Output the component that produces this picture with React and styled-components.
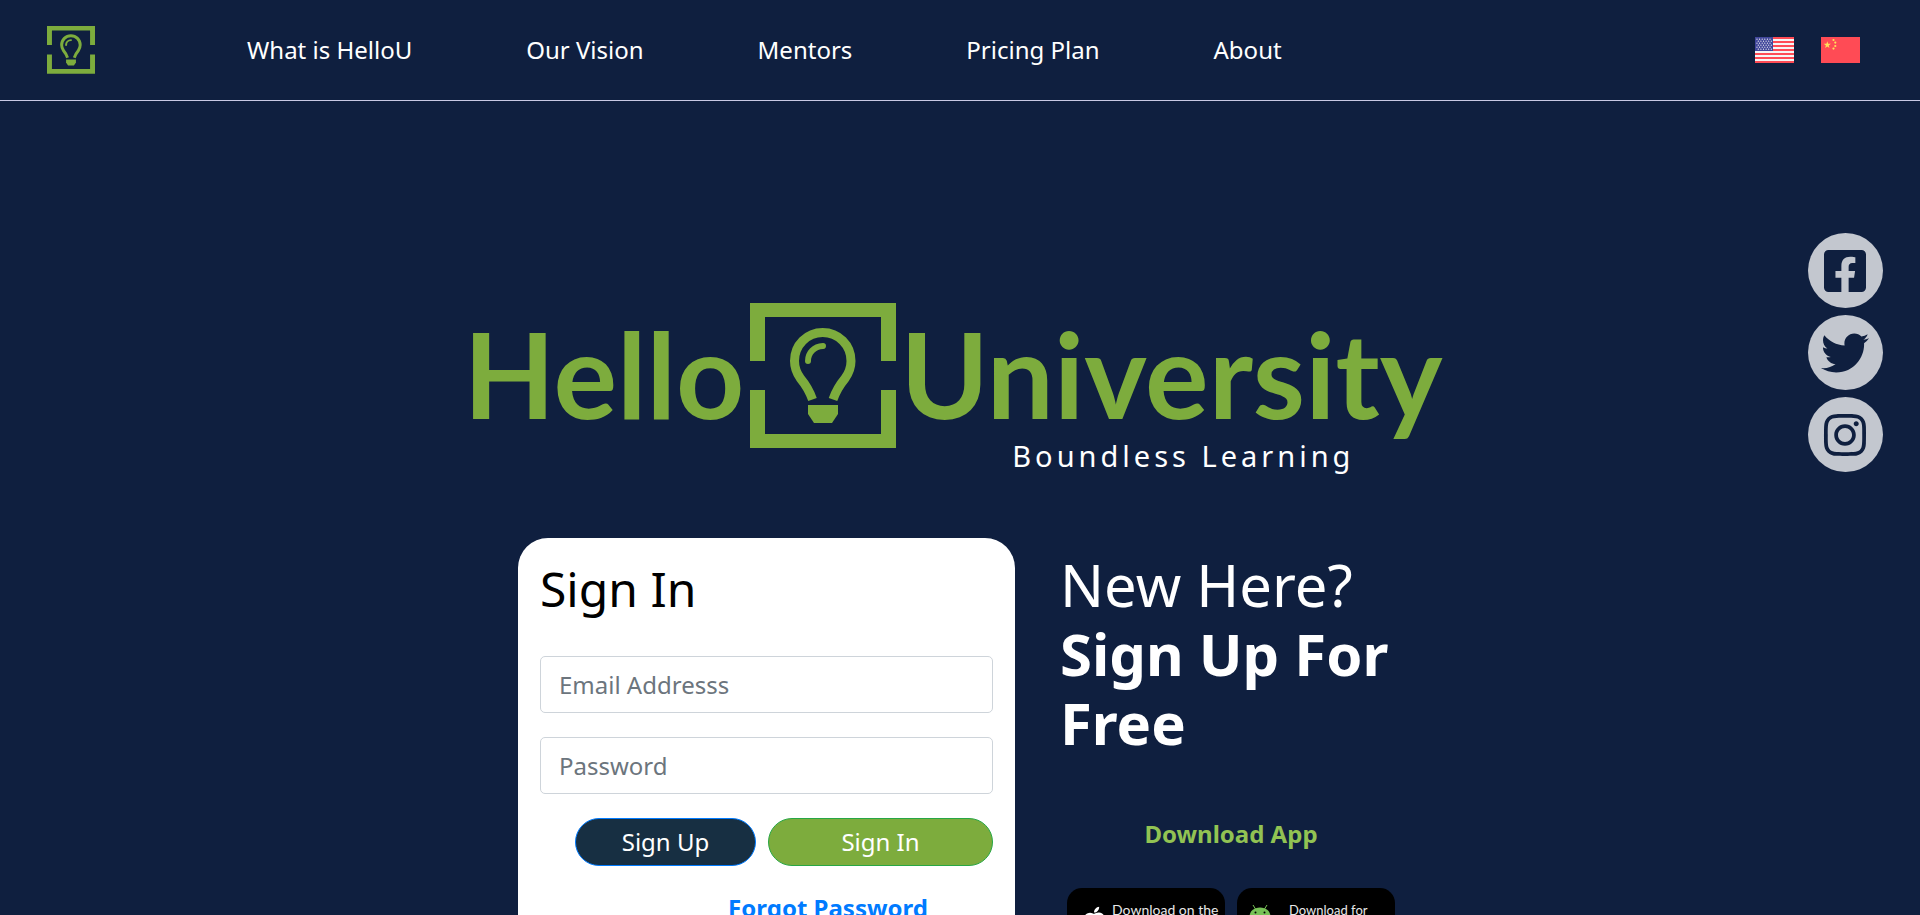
import React from "react";
import styled, { createGlobalStyle } from "styled-components";
import { FaFacebookSquare, FaTwitter, FaInstagram, FaApple } from "react-icons/fa";

const GlobalStyle = createGlobalStyle`
  *, *::before, *::after { box-sizing: border-box; }
  body {
    margin: 0;
    background: #0f1f3f;
    color: #fff;
    font: 24px/36px "Noto Sans", "Liberation Sans", sans-serif;
  }
  a { text-decoration: none; }
`;

const Header = styled.header`
  display: flex;
  align-items: center;
  height: 101px;
  padding: 0 60px 0 47px;
  border-bottom: 1px solid #c9c9e4;
`;

const HomeLink = styled.a`
  display: flex;
  width: 48px;
  margin-right: 152px;
`;

const Nav = styled.nav`
  display: flex;
  gap: 114px;
`;

const NavLink = styled.a`
  color: #fff;
  white-space: nowrap;
`;

const Languages = styled.div`
  display: flex;
  gap: 27px;
  margin-left: auto;
`;

const FlagButton = styled.button`
  display: flex;
  padding: 0;
  border: 0;
  background: none;
  cursor: pointer;
`;

const Social = styled.aside`
  position: fixed;
  top: 233px;
  right: 37px;
  display: flex;
  flex-direction: column;
  gap: 7px;
`;

const SocialLink = styled.a`
  display: flex;
  align-items: center;
  justify-content: center;
  width: 75px;
  height: 75px;
  padding-right: 2px;
  border-radius: 50%;
  background: #c3c7cf;
  color: #0f1f3f;
  font-size: 48px;
`;

const Main = styled.main`
  display: flex;
  flex-direction: column;
  align-items: center;
  padding: 202px 24px 0;
`;

const Brand = styled.div`
  display: flex;
  flex-direction: column;
  padding-right: 14px;
`;

const Wordmark = styled.div`
  display: flex;
  color: #7dac3d;
  font: 700 119px/140px Lato, "Noto Sans", sans-serif;
`;

const Emblem = styled.span`
  display: flex;
  width: 146px;
  height: 145px;
  margin: 0 4px 0 6px;
`;

const Tagline = styled.p`
  align-self: flex-end;
  margin: -10px 88px 0 0;
  font-size: 29px;
  line-height: 36px;
  letter-spacing: 4px;
`;

const Columns = styled.div`
  display: flex;
  align-items: flex-start;
  gap: 45px;
  width: 100%;
  max-width: 884px;
  margin-top: 64px;
`;

const Card = styled.form`
  display: flex;
  flex-direction: column;
  gap: 24px;
  flex: 0 0 497px;
  padding: 22px;
  border-radius: 30px;
  background: #fff;
`;

const CardTitle = styled.h1`
  margin: 0 0 14px;
  color: #000;
  font-size: 48px;
  font-weight: 400;
  line-height: 58px;
`;

const Field = styled.input`
  width: 100%;
  height: 57px;
  padding: 0 18px;
  border: 1px solid #ced4da;
  border-radius: 5px;
  background: #fff;
  color: #495057;
  font: inherit;
  &::placeholder { color: #6c757d; opacity: 1; }
`;

const Actions = styled.div`
  display: flex;
  justify-content: flex-end;
  gap: 12px;
`;

const PillButton = styled.button`
  width: ${(p) => (p.$primary ? 225 : 181)}px;
  height: 48px;
  padding: 0;
  border: 1px solid ${(p) => (p.$primary ? "#28a745" : "#007bff")};
  border-radius: 24px;
  background: ${(p) => (p.$primary ? "#7dac3d" : "#172f42")};
  color: #fff;
  font: inherit;
  cursor: pointer;
`;

const ForgotLink = styled.a`
  align-self: flex-end;
  width: 330px;
  color: #007bff;
  font-weight: 700;
  text-align: center;
`;

const Invite = styled.section`
  flex: 1;
  padding-top: 12px;
`;

const InviteTitle = styled.h2`
  margin: 0;
  font-size: 58px;
  font-weight: 400;
  line-height: 69px;
  strong { display: block; font-weight: 700; }
`;

const DownloadTitle = styled.h3`
  margin: 59px 0 36px;
  color: #92c353;
  font-size: 24px;
  line-height: 36px;
  text-align: center;
`;

const Stores = styled.div`
  display: flex;
  justify-content: center;
  gap: 12px;
`;

const StoreLink = styled.a`
  display: flex;
  align-items: center;
  gap: ${(p) => p.$gap}px;
  width: 158px;
  height: 62px;
  padding-left: ${(p) => p.$inset}px;
  border-radius: 15px;
  background: #000;
  color: #e8e8e8;
  font: ${(p) => p.$size}px/18px Lato, "Noto Sans", sans-serif;
  white-space: nowrap;
  svg { flex: none; }
`;

const StoreName = styled.b`
  display: block;
  font-weight: 700;
`;

function BulbMark() {
  return (
    <svg viewBox="0 0 146 145" width="100%" height="100%" fill="none" aria-hidden="true">
      <path fill="#7dac3d" d="M0 0H146V58H131V14H15V58H0ZM0 87H15V131H131V87H146V145H0Z" />
      <path
        stroke="#7dac3d"
        strokeWidth="9"
        d="M62.500 96.500C59.500 88 55.500 81.500 50.500 75.500C46.500 70 44.500 64.500 44.500 58C44.500 42 57 29.500 72.700 29.500S101 42 101 58C101 64.500 99 70 95 75.500C90 81.500 86 88 83 96.500"
      />
      <path stroke="#7dac3d" strokeWidth="6" strokeLinecap="round" d="M58 58C58 50 64 43.500 73 43" />
      <path fill="#7dac3d" d="M58 102H88V111L82 120H64L58 111Z" />
    </svg>
  );
}

function FlagUS() {
  const stars = [];
  for (let r = 0; r < 6; r++)
    for (let c = 0; c < 6; c++)
      stars.push(<circle key={`${r}-${c}`} cx={2 + c * 2.6 + (r % 2) * 1.3} cy={2.2 + r * 2} r="0.6" />);
  return (
    <svg width="39" height="26" viewBox="0 0 39 26" aria-hidden="true">
      <rect width="39" height="26" fill="#ff4b55" />
      {[2, 6, 10, 14, 18, 22].map((y) => (
        <rect key={y} y={y} width="39" height="2" fill="#f5f5f5" />
      ))}
      <rect width="18" height="14" fill="#41479b" />
      <g fill="#f5f5f5">{stars}</g>
    </svg>
  );
}

function FlagCN() {
  return (
    <svg width="39" height="26" viewBox="0 0 39 26" aria-hidden="true">
      <rect width="39" height="26" fill="#ff4b55" />
      <g fill="#ffe15a">
        <path d="M6.300 4.200L7.200 6.800H9.900L7.700 8.400L8.500 11L6.300 9.400L4.100 11L4.900 8.400L2.700 6.800H5.400Z" />
        <circle cx="12.500" cy="3" r="1.100" />
        <circle cx="14.300" cy="5.600" r="1.100" />
        <circle cx="14.300" cy="9" r="1.100" />
        <circle cx="12.500" cy="11.600" r="1.100" />
      </g>
    </svg>
  );
}

function AndroidBot() {
  return (
    <svg width="30" height="28" viewBox="0 0 30 28" fill="#78c257" aria-hidden="true">
      <path d="M4.500 12C4.500 6 9 2.500 15 2.500S25.500 6 25.500 12Z" />
      <path d="M8 0L10.500 4M22 0L19.500 4" stroke="#78c257" />
      <circle cx="10.500" cy="7.500" r="1" fill="#000" />
      <circle cx="19.500" cy="7.500" r="1" fill="#000" />
      <path d="M4.500 13H25.500V21Q25.500 23 23.500 23H6.500Q4.500 23 4.500 21Z" />
      <rect x="0" y="13" width="3.500" height="8" rx="1.700" />
      <rect x="26.500" y="13" width="3.500" height="8" rx="1.700" />
      <rect x="9" y="20" width="4" height="8" rx="2" />
      <rect x="17" y="20" width="4" height="8" rx="2" />
    </svg>
  );
}

const NAV = ["What is HelloU", "Our Vision", "Mentors", "Pricing Plan", "About"];

export default function App() {
  return (
    <>
      <GlobalStyle />
      <Header>
        <HomeLink href="#" aria-label="Home"><BulbMark /></HomeLink>
        <Nav>
          {NAV.map((label) => (
            <NavLink key={label} href="#">{label}</NavLink>
          ))}
        </Nav>
        <Languages>
          <FlagButton type="button" aria-label="English"><FlagUS /></FlagButton>
          <FlagButton type="button" aria-label="中文"><FlagCN /></FlagButton>
        </Languages>
      </Header>
      <Social>
        <SocialLink href="#" aria-label="Facebook"><FaFacebookSquare /></SocialLink>
        <SocialLink href="#" aria-label="Twitter"><FaTwitter /></SocialLink>
        <SocialLink href="#" aria-label="Instagram"><FaInstagram /></SocialLink>
      </Social>
      <Main>
        <Brand>
          <Wordmark>
            <span>Hello</span>
            <Emblem><BulbMark /></Emblem>
            <span>University</span>
          </Wordmark>
          <Tagline>Boundless Learning</Tagline>
        </Brand>
        <Columns>
          <Card>
            <CardTitle>Sign In</CardTitle>
            <Field type="email" placeholder="Email Addresss" aria-label="Email address" />
            <Field type="password" placeholder="Password" aria-label="Password" />
            <Actions>
              <PillButton type="button">Sign Up</PillButton>
              <PillButton type="submit" $primary>Sign In</PillButton>
            </Actions>
            <ForgotLink href="#">Forgot Password</ForgotLink>
          </Card>
          <Invite>
            <InviteTitle>New Here? <strong>Sign Up For Free</strong></InviteTitle>
            <DownloadTitle>Download App</DownloadTitle>
            <Stores>
              <StoreLink href="#" $inset={13} $gap={4} $size={14}>
                <FaApple size={28} color="#fff" />
                <span>Download on the<StoreName>App Store</StoreName></span>
              </StoreLink>
              <StoreLink href="#" $inset={8} $gap={14} $size={13}>
                <AndroidBot />
                <span>Download for<StoreName>Android</StoreName></span>
              </StoreLink>
            </Stores>
          </Invite>
        </Columns>
      </Main>
    </>
  );
}
